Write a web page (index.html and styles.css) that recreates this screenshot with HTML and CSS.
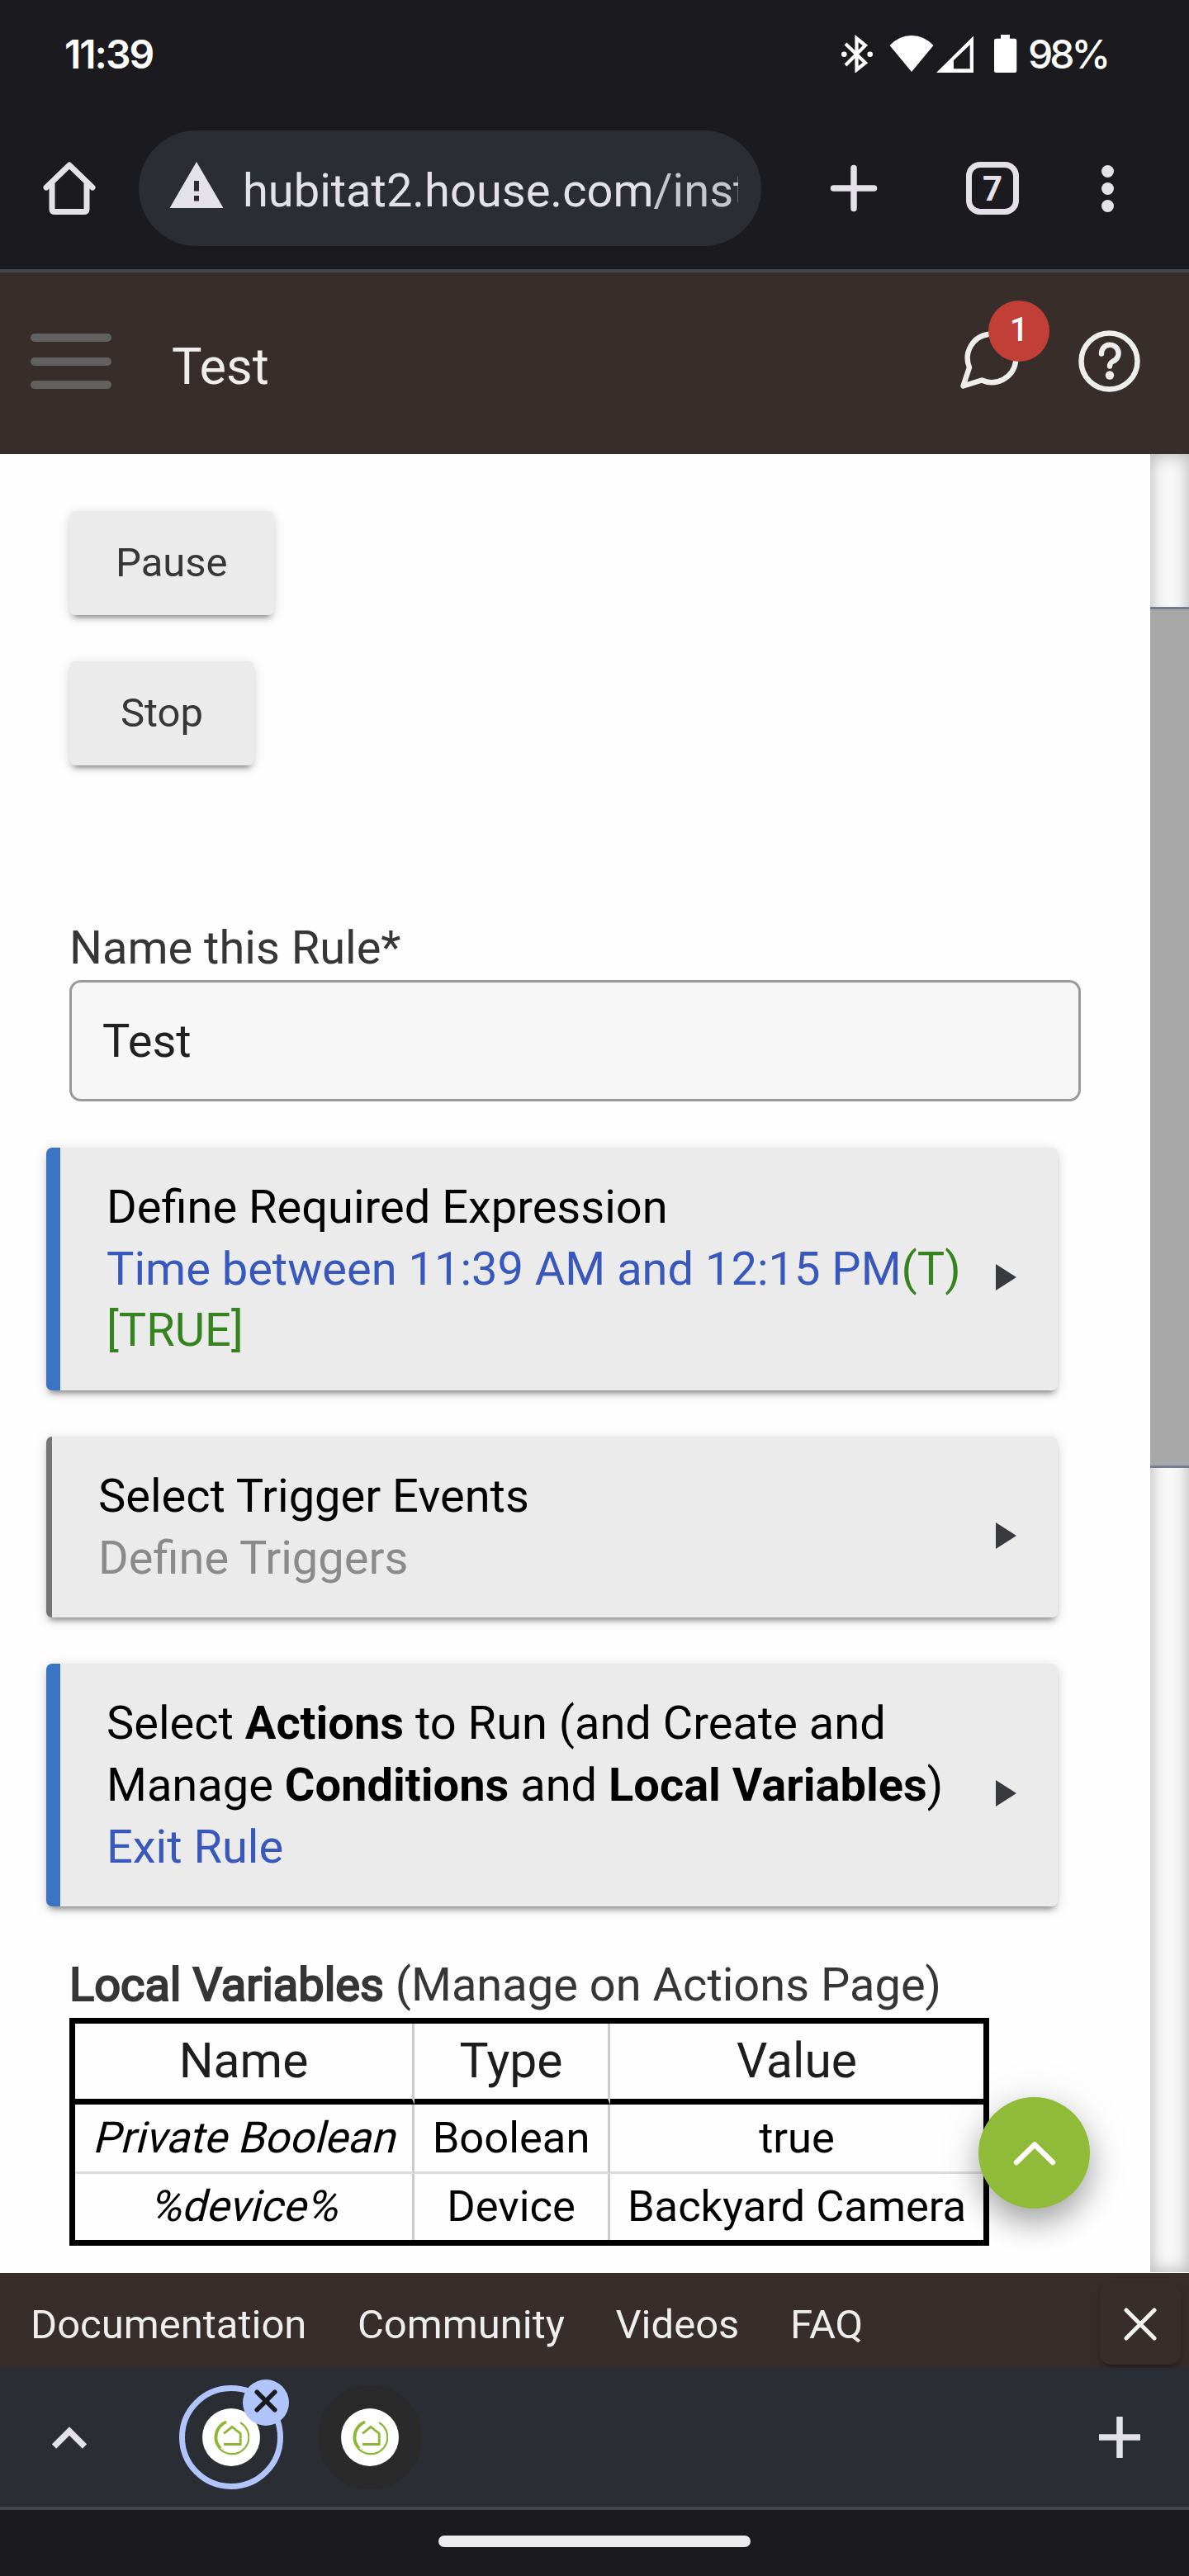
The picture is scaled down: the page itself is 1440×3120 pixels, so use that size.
FILE: index.html
```html
<!DOCTYPE html>
<html lang="en">
<head>
    <meta charset="UTF-8">
    <meta name="viewport" content="width=device-width, initial-scale=1.0">
    <title>Test</title>
    <link rel="stylesheet" href="styles.css">
</head>
<body>

<div class="status-bar">
    <span class="clock">11:39</span>
    <div class="status-icons">
        <svg class="bluetooth" width="38" height="46" viewBox="0 0 38 46">
            <path d="M5 11 L29 34 L18.500 42.500 V4.500 L29 13 L5 37" fill="none" stroke="#fff" stroke-width="4.200"/>
            <circle cx="3.300" cy="23.700" r="3.300" fill="#fff"/>
            <circle cx="34.700" cy="23.700" r="3.300" fill="#fff"/>
        </svg>
        <svg class="wifi" width="54" height="46" viewBox="0 0 54 46">
            <path d="M27 45 L0.500 13 Q12 1 27 1 Q42 1 53.500 13 Z" fill="#fff"/>
        </svg>
        <svg class="signal" width="45" height="46" viewBox="0 0 45 46">
            <path fill-rule="evenodd" d="M0 46 L45 1.500 V46 Z M21 31 V41.300 H40.700 V12.300 Z" fill="#fff"/>
        </svg>
        <svg class="battery" width="28" height="46" viewBox="0 0 28 46">
            <path d="M8 0 H19 V4.700 H25 Q27.300 4.700 27.300 7 V43.500 Q27.300 46 25 46 H2.500 Q0 46 0 43.500 V7 Q0 4.700 2.500 4.700 H8 Z" fill="#fff"/>
        </svg>
        <span class="percent">98%</span>
    </div>
</div>

<div class="browser-bar">
    <svg class="home" width="64" height="64" viewBox="0 0 64 64" fill="none" stroke="#e4e2e8" stroke-width="7" stroke-linejoin="round" stroke-linecap="round">
        <path d="M4 31 L32 4 L60 31 M11 26 V57 Q11 60.500 14.500 60.500 H49.500 Q53 60.500 53 57 V26"/>
    </svg>
    <div class="address">
        <svg width="66" height="57" viewBox="0 0 66 57">
            <path fill-rule="evenodd" d="M33 0 L65.500 56 H0.500 Z M30 23 V35.500 H36 V23 Z M30 41 V47.500 H36 V41 Z" fill="#e4e2e8"/>
        </svg>
        <div class="url">hubitat2.house.com<span>/installedapp</span></div>
    </div>
    <svg class="new-tab" width="58" height="58" viewBox="0 0 58 58">
        <path d="M29 4.500 V53.500 M4.500 29 H53.500" stroke="#e4e2e8" stroke-width="7.500" stroke-linecap="round"/>
    </svg>
    <div class="tab-count">7</div>
    <div class="dots"><i></i><i></i><i></i></div>
</div>

<div class="header">
    <div class="hamburger"><i></i><i></i><i></i></div>
    <h1>Test</h1>
    <div class="messages">
        <svg width="72" height="74" viewBox="0 0 72 74" fill="none" stroke="#eee" stroke-width="6.400" stroke-linejoin="round">
            <path d="M4.500 67.500 L12 45 A29.300 29.300 0 1 1 27 60.500 Z"/>
        </svg>
        <span class="badge">1</span>
    </div>
    <svg class="help" width="75" height="75" viewBox="0 0 75 75" fill="none" stroke="#eee">
        <circle cx="37.500" cy="37.500" r="34" stroke-width="6.500"/>
        <path d="M28 28.500 A10.300 10.300 0 1 1 42 37.500 Q38 39.500 38 43.500" stroke-width="6.400" stroke-linecap="round"/>
        <circle cx="38" cy="54.500" r="5.200" fill="#eee" stroke="none"/>
    </svg>
</div>

<div class="page">
    <div class="content">
        <button class="btn">Pause</button>
        <button class="btn">Stop</button>

        <label class="rule-label" for="ruleName">Name this Rule*</label>
        <input class="rule-input" type="text" id="ruleName" value="Test">

        <div class="card card-set">
            <div class="card-text">
                Define Required Expression<br>
                <span class="blue">Time between 11:39 AM and 12:15 PM</span><span class="green">(T)</span><br>
                <span class="green">[TRUE]</span>
            </div>
            <svg class="arrow" width="25" height="32" viewBox="0 0 25 32"><path d="M0 0 L25 16 L0 32 Z" fill="#383a40"/></svg>
        </div>

        <div class="card">
            <div class="card-text">
                Select Trigger Events<br>
                <span class="gray">Define Triggers</span>
            </div>
            <svg class="arrow" width="25" height="32" viewBox="0 0 25 32"><path d="M0 0 L25 16 L0 32 Z" fill="#383a40"/></svg>
        </div>

        <div class="card card-set">
            <div class="card-text">
                Select <b>Actions</b> to Run (and Create and<br>
                Manage <b>Conditions</b> and <b>Local Variables</b>)<br>
                <span class="blue">Exit Rule</span>
            </div>
            <svg class="arrow" width="25" height="32" viewBox="0 0 25 32"><path d="M0 0 L25 16 L0 32 Z" fill="#383a40"/></svg>
        </div>

        <div class="variables-title"><span class="strong">Local Variables</span> (Manage on Actions Page)</div>
        <table class="variables">
            <thead>
                <tr><th class="col-name">Name</th><th class="col-type">Type</th><th class="col-value">Value</th></tr>
            </thead>
            <tbody>
                <tr><td><span class="slanted">Private Boolean</span></td><td>Boolean</td><td>true</td></tr>
                <tr><td><span class="slanted">%device%</span></td><td>Device</td><td>Backyard Camera</td></tr>
            </tbody>
        </table>
    </div>
    <div class="scroll-track">
        <div class="scroll-thumb"></div>
    </div>
    <button class="to-top">
        <svg width="52" height="30" viewBox="0 0 52 30"><path d="M4 26 L26 4.500 L48 26" fill="none" stroke="#fff" stroke-width="6.500" stroke-linecap="round" stroke-linejoin="round"/></svg>
    </button>
</div>

<div class="footer">
    <a>Documentation</a>
    <a>Community</a>
    <a>Videos</a>
    <a>FAQ</a>
    <button class="footer-close">
        <svg width="40" height="40" viewBox="0 0 40 40"><path d="M3 3 L37 37 M37 3 L3 37" stroke="#f2f2f2" stroke-width="5" stroke-linecap="round"/></svg>
    </button>
</div>

<div class="tab-strip">
    <svg class="expand" width="42" height="27" viewBox="0 0 42 27"><path d="M2.500 24 L21 5.500 L39.500 24" fill="none" stroke="#e4e2e8" stroke-width="7.500"/></svg>
    <div class="tab tab-active">
        <div class="favicon">
            <svg width="44" height="44" viewBox="0 0 44 44" fill="none" stroke="#8ab833">
                <path d="M16 2.800 A20.300 20.300 0 1 0 33 4.200" stroke-width="2.200"/>
                <path d="M16 3.500 A20 20 0 0 0 9 35.500" stroke-width="3.400"/>
                <path d="M13 17.500 L23 9.300 L33.200 17.500 V30.500 H13" stroke-width="2.800"/>
            </svg>
        </div>
        <span class="tab-close">
            <svg width="28" height="28" viewBox="0 0 28 28"><path d="M3.200 3.200 L24.800 24.800 M24.800 3.200 L3.200 24.800" stroke="#1b1b1f" stroke-width="5.500" stroke-linecap="round"/></svg>
        </span>
    </div>
    <div class="tab">
        <div class="favicon">
            <svg width="44" height="44" viewBox="0 0 44 44" fill="none" stroke="#8ab833">
                <path d="M16 2.800 A20.300 20.300 0 1 0 33 4.200" stroke-width="2.200"/>
                <path d="M16 3.500 A20 20 0 0 0 9 35.500" stroke-width="3.400"/>
                <path d="M13 17.500 L23 9.300 L33.200 17.500 V30.500 H13" stroke-width="2.800"/>
            </svg>
        </div>
    </div>
    <svg class="add" width="50" height="50" viewBox="0 0 50 50"><path d="M25 0 V50 M0 25 H50" stroke="#e4e2e8" stroke-width="7.500"/></svg>
</div>

<div class="nav-bar">
    <div class="handle"></div>
</div>

</body>
</html>
```

FILE: styles.css
```css
* {
    box-sizing: border-box;
}
body {
    margin: 0;
    width: 1440px;
    height: 3120px;
    overflow: hidden;
    font-family: Roboto, "Liberation Sans", sans-serif;
    font-size: 56px;
    background-color: #1b1a1e;
}
svg {
    display: block;
    flex: none;
}
button {
    font-family: inherit;
    border: none;
}

/* phone status bar */
.status-bar {
    display: flex;
    align-items: center;
    justify-content: space-between;
    height: 130px;
    padding: 0 94px 0 78px;
    color: #fff;
    font-family: Inter, sans-serif;
    font-weight: 500;
    font-size: 48px;
    letter-spacing: -2px;
}
.clock {
    font-weight: 600;
}
.status-icons {
    display: flex;
    align-items: center;
}
.wifi {
    margin-left: 20px;
}
.signal {
    margin-left: 3px;
}
.battery {
    margin: 0 13px 0 25px;
}
.percent {
    width: 101px;
    letter-spacing: -4px;
    white-space: nowrap;
}

/* browser toolbar */
.browser-bar {
    display: flex;
    align-items: center;
    height: 200px;
    padding: 0 90px 0 52px;
    border-bottom: 4px solid #44464f;
}
.address {
    display: flex;
    align-items: center;
    width: 754px;
    height: 140px;
    margin-left: 52px;
    padding: 0 28px 0 37px;
    border-radius: 70px;
    background-color: #2b2d34;
}
.address svg {
    margin-bottom: 8px;
}
.url {
    flex: 1;
    margin-left: 23px;
    padding-top: 6px;
    overflow: hidden;
    white-space: nowrap;
    color: #e4e2e8;
}
.url span {
    color: #c5c6d0;
}
.new-tab {
    margin-left: 83px;
}
.tab-count {
    display: flex;
    align-items: center;
    justify-content: center;
    width: 64px;
    height: 64px;
    margin-left: 107px;
    border: 7.5px solid #e4e2e8;
    border-radius: 17px;
    color: #e4e2e8;
    font-size: 42px;
    font-weight: 700;
}
.dots {
    display: flex;
    flex-direction: column;
    gap: 6px;
    margin-left: 100px;
}
.dots i {
    width: 15px;
    height: 15px;
    border-radius: 50%;
    background-color: #e4e2e8;
}

/* app header */
.header {
    display: flex;
    align-items: center;
    height: 220px;
    padding: 0 59px 0 37px;
    background-color: #372d2b;
}
.hamburger {
    display: flex;
    flex-direction: column;
    gap: 18.5px;
    width: 98px;
    margin-bottom: 5px;
}
.hamburger i {
    height: 10px;
    border-radius: 5px;
    background-color: #616161;
}
.header h1 {
    margin: 8px 0 0 73px;
    color: #eee;
    font-size: 61.25px;
    font-weight: 400;
}
.messages {
    position: relative;
    margin: 0 72px 6px auto;
}
.badge {
    position: absolute;
    left: 35px;
    top: -36px;
    width: 74px;
    height: 74px;
    border-radius: 50%;
    background-color: #c23f38;
    color: #fff;
    font-size: 40px;
    font-weight: 500;
    line-height: 71px;
    text-align: center;
}
.help {
    margin-bottom: 6px;
}

/* page */
.page {
    position: relative;
    display: flex;
    height: 2203px;
    background-color: #fefefe;
}
.content {
    display: flex;
    flex-direction: column;
    align-items: flex-start;
    width: 1393px;
    padding: 69px 84px 0 84px;
}
.btn {
    min-width: 224px;
    height: 126px;
    margin-bottom: 56px;
    padding: 0 56px 2px;
    border-radius: 7px;
    background-color: #ebebeb;
    color: #363636;
    font-size: 49px;
    box-shadow: 0 7px 7px -5px rgba(0, 0, 0, 0.45), 0 3px 14px rgba(0, 0, 0, 0.16);
}
.rule-label {
    margin-top: 128px;
    color: #363636;
    line-height: 74px;
}
.rule-input {
    width: 1225px;
    height: 147px;
    margin: 2px 0 56px 0;
    padding: 0 37px;
    border: 3px solid #999;
    border-radius: 14px;
    background-color: #f7f7f7;
    color: #212121;
    font-family: inherit;
    font-size: 56px;
}
.card {
    display: flex;
    align-items: center;
    width: 1225px;
    margin: 0 0 56px -28px;
    padding: 35px 50px 35px 56px;
    border-left: 7px solid #757575;
    border-radius: 7px;
    background-color: #ebebeb;
    color: #000;
    line-height: 74.67px;
    box-shadow: 0 7px 7px -4px rgba(0, 0, 0, 0.4), 0 3px 16px rgba(0, 0, 0, 0.16);
}
.card-set {
    border-left: 17px solid #3b74c5;
}
.card-text {
    flex: 1;
}
.arrow {
    margin-top: 20px;
}
.blue {
    color: #3958bb;
}
.green {
    color: #378220;
}
.gray {
    color: #8a8a8a;
}
.variables-title {
    color: #363636;
    line-height: 79px;
}
.strong {
    -webkit-text-stroke: 2.2px #363636;
}
.variables {
    width: 1114px;
    height: 276px;
    border: 7px solid #000;
    border-spacing: 0;
    table-layout: fixed;
    color: #000;
    font-size: 52.5px;
    text-align: center;
}
.variables th {
    height: 98px;
    padding: 0 0 3px;
    border-bottom: 7px solid #000;
    color: #1d1d1d;
    font-size: 58.8px;
    font-weight: 400;
}
.variables td {
    padding: 0 0 2px;
}
.variables tbody tr:first-child td {
    height: 84px;
    border-bottom: 3px solid #ddd;
}
.variables th:not(:last-child),
.variables td:not(:last-child) {
    border-right: 3px solid #ccc;
}
.slanted {
    display: inline-block;
    transform: skewX(-14deg);
    transform-origin: 50% 78%;
}
.col-name {
    width: 411px;
}
.col-type {
    width: 237px;
}

/* custom scrollbar */
.scroll-track {
    width: 47px;
    height: 2202px;
    padding-top: 185px;
    background-color: #f9f9f9;
    box-shadow: inset 0 0 21px rgba(0, 0, 0, 0.3);
}
.scroll-thumb {
    height: 1043px;
    border: solid #708090;
    border-width: 3px 0;
    background-color: #a8a8a8;
}
.to-top {
    position: absolute;
    left: 1185px;
    top: 1990px;
    display: flex;
    align-items: center;
    justify-content: center;
    width: 135px;
    height: 135px;
    border-radius: 50%;
    background-color: #8fbb38;
    box-shadow: 0 18px 35px rgba(0, 0, 0, 0.3), 0 4px 60px rgba(0, 0, 0, 0.1);
}

/* footer */
.footer {
    display: flex;
    align-items: center;
    height: 115px;
    padding: 9px 10px 0 37px;
    background-color: #372d2b;
    color: #eee;
    font-size: 49px;
}
.footer a {
    margin-right: 61.5px;
}
.footer-close {
    display: flex;
    align-items: center;
    justify-content: center;
    width: 98px;
    height: 98px;
    margin-left: auto;
    padding: 0;
    border-radius: 14px;
    background-color: #372d2b;
    box-shadow: 0 7px 7px -5px rgba(0, 0, 0, 0.4), 0 3px 12px rgba(0, 0, 0, 0.16);
}

/* tab strip */
.tab-strip {
    position: relative;
    display: flex;
    align-items: center;
    height: 172px;
    padding: 0 59px 0 63px;
    border-bottom: 4px solid #44464f;
    background-color: #2b2d34;
}
.tab {
    position: relative;
    display: flex;
    align-items: center;
    justify-content: center;
    width: 126px;
    height: 126px;
    margin-left: 42px;
    border-radius: 50%;
    background-color: #2a2a2a;
}
.tab-active {
    margin-left: 112px;
    border: 7px solid #b0c5fb;
    background-color: transparent;
}
.favicon {
    display: flex;
    align-items: center;
    justify-content: center;
    width: 70px;
    height: 70px;
    border-radius: 50%;
    background-color: #fff;
}
.tab-close {
    position: absolute;
    left: 70px;
    top: -14px;
    display: flex;
    align-items: center;
    justify-content: center;
    width: 56px;
    height: 56px;
    padding-bottom: 4px;
    border-radius: 50%;
    background-color: #b0c5fb;
}
.add {
    margin-left: auto;
}

.nav-bar {
    display: flex;
    justify-content: center;
    height: 80px;
    padding-top: 31px;
}
.handle {
    width: 378px;
    height: 14px;
    border-radius: 7px;
    background-color: #ececec;
}
```
